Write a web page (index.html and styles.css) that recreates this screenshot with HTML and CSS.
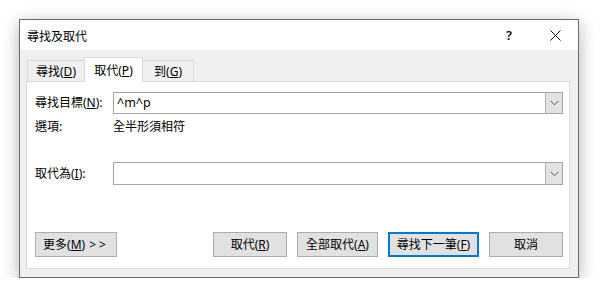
FILE: index.html
```html
<!DOCTYPE html>
<html lang="zh-Hant">
<head>
<meta charset="utf-8">
<title>尋找及取代</title>
<link rel="stylesheet" href="styles.css">
</head>
<body>
<div class="window">
  <div class="titlebar">
    <span class="title">尋找及取代</span>
    <span class="cap-btn help">?</span>
    <span class="cap-btn close">
      <svg width="11" height="11" viewBox="0 0 11 11"><path d="M0.5 0.5 L10.5 10.5 M10.5 0.5 L0.5 10.5" stroke="#111" stroke-width="1" fill="none"/></svg>
    </span>
  </div>
  <div class="client">
    <div class="tabs">
      <div class="tab tab-find">尋找(<u>D</u>)</div>
      <div class="tab tab-replace active">取代(<u>P</u>)</div>
      <div class="tab tab-goto">到(<u>G</u>)</div>
    </div>
    <div class="panel">
      <div class="row row-find">
        <span class="label">尋找目標(<u>N</u>):</span>
        <div class="combo">
          <span class="combo-text">^m^p</span>
          <span class="drop"><svg width="9" height="6" viewBox="0 0 9 6"><path d="M0.5 0.8 L4.5 4.8 L8.5 0.8" stroke="#555" stroke-width="1" fill="none"/></svg></span>
        </div>
      </div>
      <div class="row row-opt">
        <span class="label">選項:</span>
        <span class="opt-value">全半形須相符</span>
      </div>
      <div class="row row-repl">
        <span class="label">取代為(<u>I</u>):</span>
        <div class="combo combo-repl">
          <span class="combo-text"></span>
          <span class="drop"><svg width="9" height="6" viewBox="0 0 9 6"><path d="M0.5 0.8 L4.5 4.8 L8.5 0.8" stroke="#555" stroke-width="1" fill="none"/></svg></span>
        </div>
      </div>
      <div class="buttons">
        <button class="btn btn-more">更多(<u>M</u>) <span class="gt">&gt;&gt;</span></button>
        <button class="btn btn-replace">取代(<u>R</u>)</button>
        <button class="btn btn-all">全部取代(<u>A</u>)</button>
        <button class="btn btn-next default">尋找下一筆(<u>F</u>)</button>
        <button class="btn btn-cancel">取消</button>
      </div>
    </div>
  </div>
</div>
</body>
</html>
```

FILE: styles.css
```css
* {
  box-sizing: border-box;
}

html, body {
  margin: 0;
  padding: 0;
  background: #ffffff;
}

body {
  padding: 19px 0 0 19px;
  font-family: "Noto Sans", "Noto Sans CJK TC", sans-serif;
  font-size: 12px;
  color: #000;
}

u {
  text-decoration: underline;
  text-underline-offset: 1px;
}

.window {
  width: 560px;
  height: 259px;
  border: 1px solid #6b6b6b;
  background: #f0f0f0;
  box-shadow: 0 4px 16px rgba(0, 0, 0, 0.3);
  display: flex;
  flex-direction: column;
}

.titlebar {
  height: 30px;
  background: #ffffff;
  display: flex;
  align-items: center;
  padding-left: 7px;
}

.title {
  font-family: "Noto Sans CJK TC", sans-serif;
  font-size: 12px;
  line-height: 16px;
  margin-top: 1px;
  color: #000;
}

.cap-btn {
  width: 46px;
  height: 30px;
  display: flex;
  align-items: center;
  justify-content: center;
}

.help {
  margin-left: auto;
  font-family: "Noto Sans", sans-serif;
  font-size: 13px;
  font-weight: 600;
  color: #111;
}

.close {
  margin-right: 0;
}

.client {
  flex: 1;
  display: flex;
  flex-direction: column;
  padding: 7px 8px 8px 6px;
}

.tabs {
  height: 24px;
  display: flex;
  align-items: flex-end;
  padding-left: 1px;
}

.tab {
  height: 21px;
  padding-top: 3px;
  text-align: center;
  line-height: 16px;
  border: 1px solid #d9d9d9;
  border-bottom: none;
  background: #f0f0f0;
  white-space: nowrap;
}

.tab-find {
  width: 57px;
  border-right: none;
}

.tab-replace {
  width: 59px;
}

.tab-goto {
  width: 51px;
  border-left: none;
}

.tab.active {
  height: 25px;
  padding-top: 5px;
  margin-bottom: -1px;
  background: #ffffff;
  position: relative;
  z-index: 1;
}

.panel {
  width: 544px;
  height: 188px;
  background: #ffffff;
  border: 1px solid #d9d9d9;
  padding: 10px 6px 0 8px;
  display: flex;
  flex-direction: column;
}

.row {
  display: flex;
  align-items: center;
}

.label {
  width: 78px;
  line-height: 16px;
  white-space: nowrap;
}

.row-find {
  height: 22px;
}

.row-opt {
  margin-top: 5px;
  height: 16px;
}

.opt-value {
  line-height: 16px;
}

.row-repl {
  margin-top: 27px;
  height: 23px;
}

.combo {
  width: 450px;
  height: 22px;
  border: 1px solid #a5a5a5;
  background: #ffffff;
  display: flex;
  align-items: stretch;
}

.combo-repl {
  height: 23px;
}

.combo-text {
  flex: 1;
  padding-left: 3px;
  line-height: 19px;
  font-size: 12.5px;
}

.drop {
  width: 17px;
  background: #e3e3e3;
  border-left: 1px solid #b4b4b4;
  display: flex;
  align-items: center;
  justify-content: center;
}

.buttons {
  margin-top: 47px;
  display: flex;
  gap: 10px;
}

.btn {
  height: 25px;
  margin: 0;
  padding: 0;
  border: 1px solid #adadad;
  background: #e1e1e1;
  font-family: "Noto Sans", "Noto Sans CJK TC", sans-serif;
  font-size: 12px;
  line-height: 16px;
  color: #000;
  white-space: nowrap;
}

.btn-more {
  width: 82px;
}

.gt {
  letter-spacing: 3px;
  margin-left: 1px;
}

.btn-replace {
  width: 74px;
  margin-left: auto;
}

.btn-all {
  width: 81px;
}

.btn-next {
  width: 91px;
}

.btn.default {
  border: 2px solid #0078d7;
}

.btn-cancel {
  width: 74px;
}
```
